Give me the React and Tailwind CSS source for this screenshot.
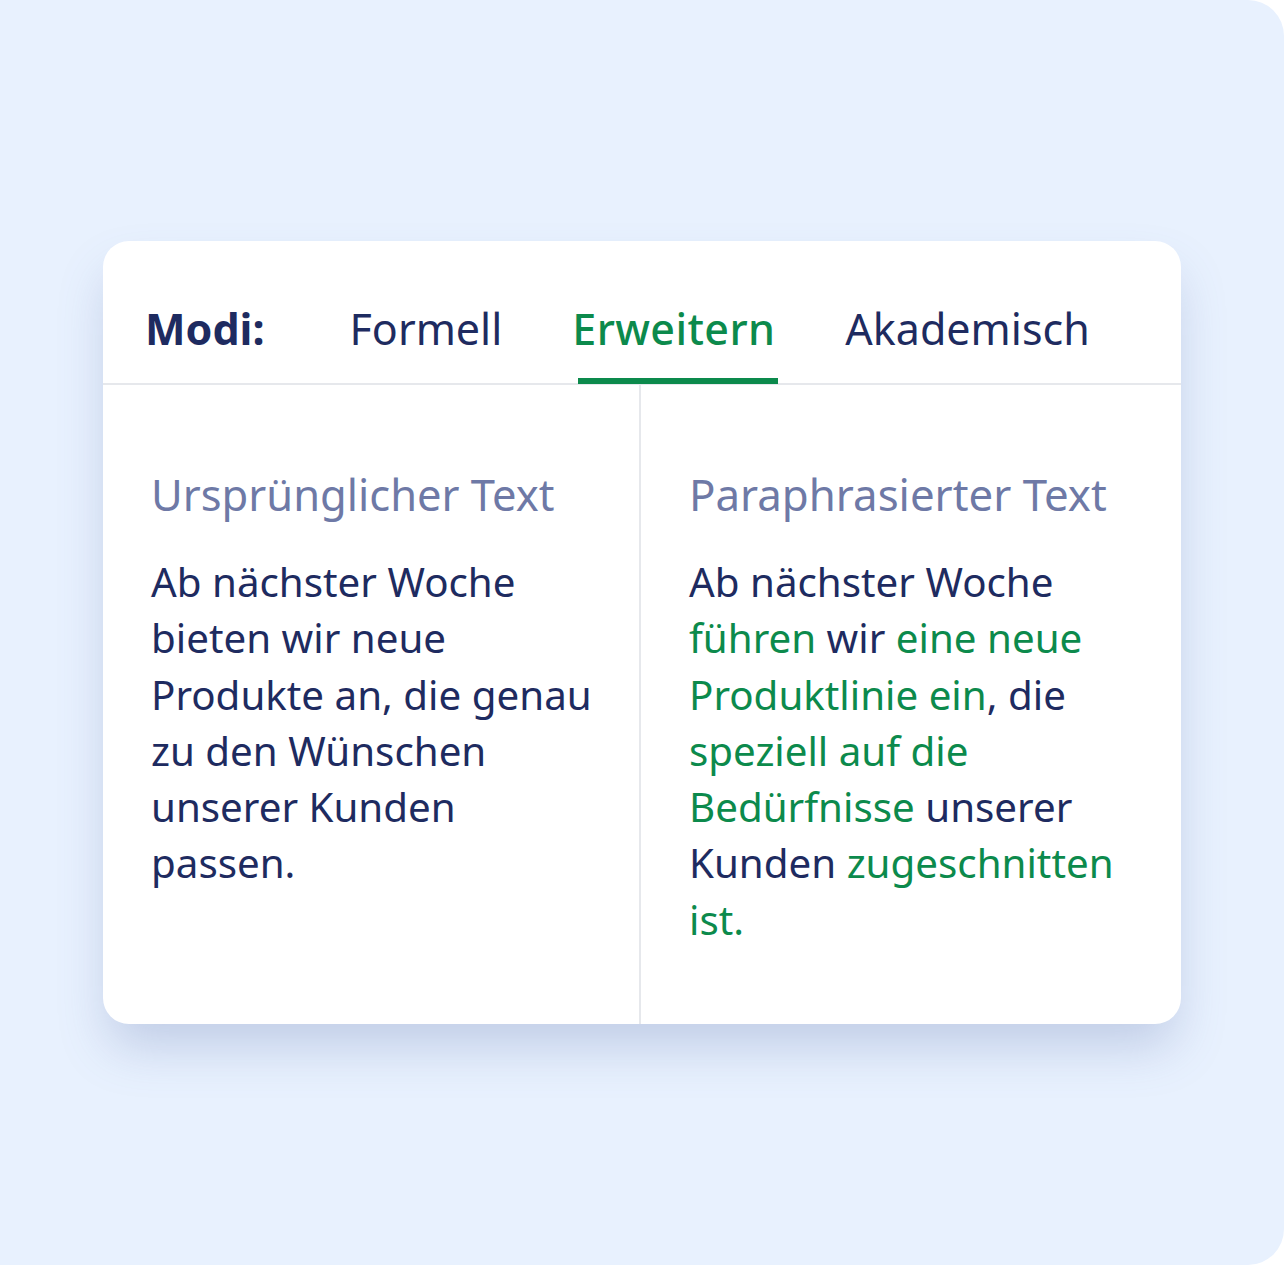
import React from "react";

const G = "text-[#0c8a4c]";

export default function App() {
  return (
    <div className="w-[1284px] h-[1265px] bg-white">
      <div
        className="w-full h-full bg-[#e8f1fe] rounded-tr-[36px] rounded-br-[36px] flex items-center justify-center"
        style={{ fontFamily: '"Noto Sans", "Open Sans", sans-serif' }}
      >
        <div className="w-[1078px] h-[783px] bg-white rounded-[26px] shadow-[0_28px_50px_-6px_rgba(90,110,170,0.28)] flex flex-col overflow-hidden">
          <div className="h-[144px] border-b-2 border-[#e6e8ec] flex items-end pl-[42px] text-[43px] leading-none">
            <div className="flex items-end">
              <div className="pb-[33px] font-bold text-[#1e2b60] mr-[85px]">Modi:</div>
              <div className="pb-[33px] text-[#1e2b60] mr-[70px]">Formell</div>
              <div className="relative pb-[33px] text-[#0c8a4c] font-medium tracking-[0.4px] mr-[70px]">
                Erweitern
                <div className="absolute left-[6px] w-[200px] bottom-[-1px] h-[6px] bg-[#0c8a4c]"></div>
              </div>
              <div className="pb-[33px] text-[#1e2b60]">Akademisch</div>
            </div>
          </div>
          <div className="flex-1 grid grid-cols-[538px_1fr]">
            <div className="border-r-2 border-[#e6e8ec] pl-[48px] pt-[81px]">
              <div className="text-[43.5px] leading-[56px] text-[#6e79a6] mb-[32px] whitespace-nowrap">Ursprünglicher Text</div>
              <p className="w-[448px] text-[40.3px] leading-[56.3px] text-[#1e2b60]">
                Ab nächster Woche bieten wir neue Produkte an, die genau zu den Wünschen unserer Kunden passen.
              </p>
            </div>
            <div className="pl-[48px] pt-[81px]">
              <div className="text-[43.8px] leading-[56px] text-[#6e79a6] mb-[32px] whitespace-nowrap">Paraphrasierter Text</div>
              <p className="w-[448px] text-[40.3px] leading-[56.3px] text-[#1e2b60]">
                Ab nächster Woche <span className={G}>führen</span> wir{" "}
                <span className={G}>eine neue Produktlinie ein</span>, die{" "}
                <span className={G}>speziell auf die Bedürfnisse</span> unserer Kunden{" "}
                <span className={G}>zugeschnitten ist.</span>
              </p>
            </div>
          </div>
        </div>
      </div>
    </div>
  );
}
